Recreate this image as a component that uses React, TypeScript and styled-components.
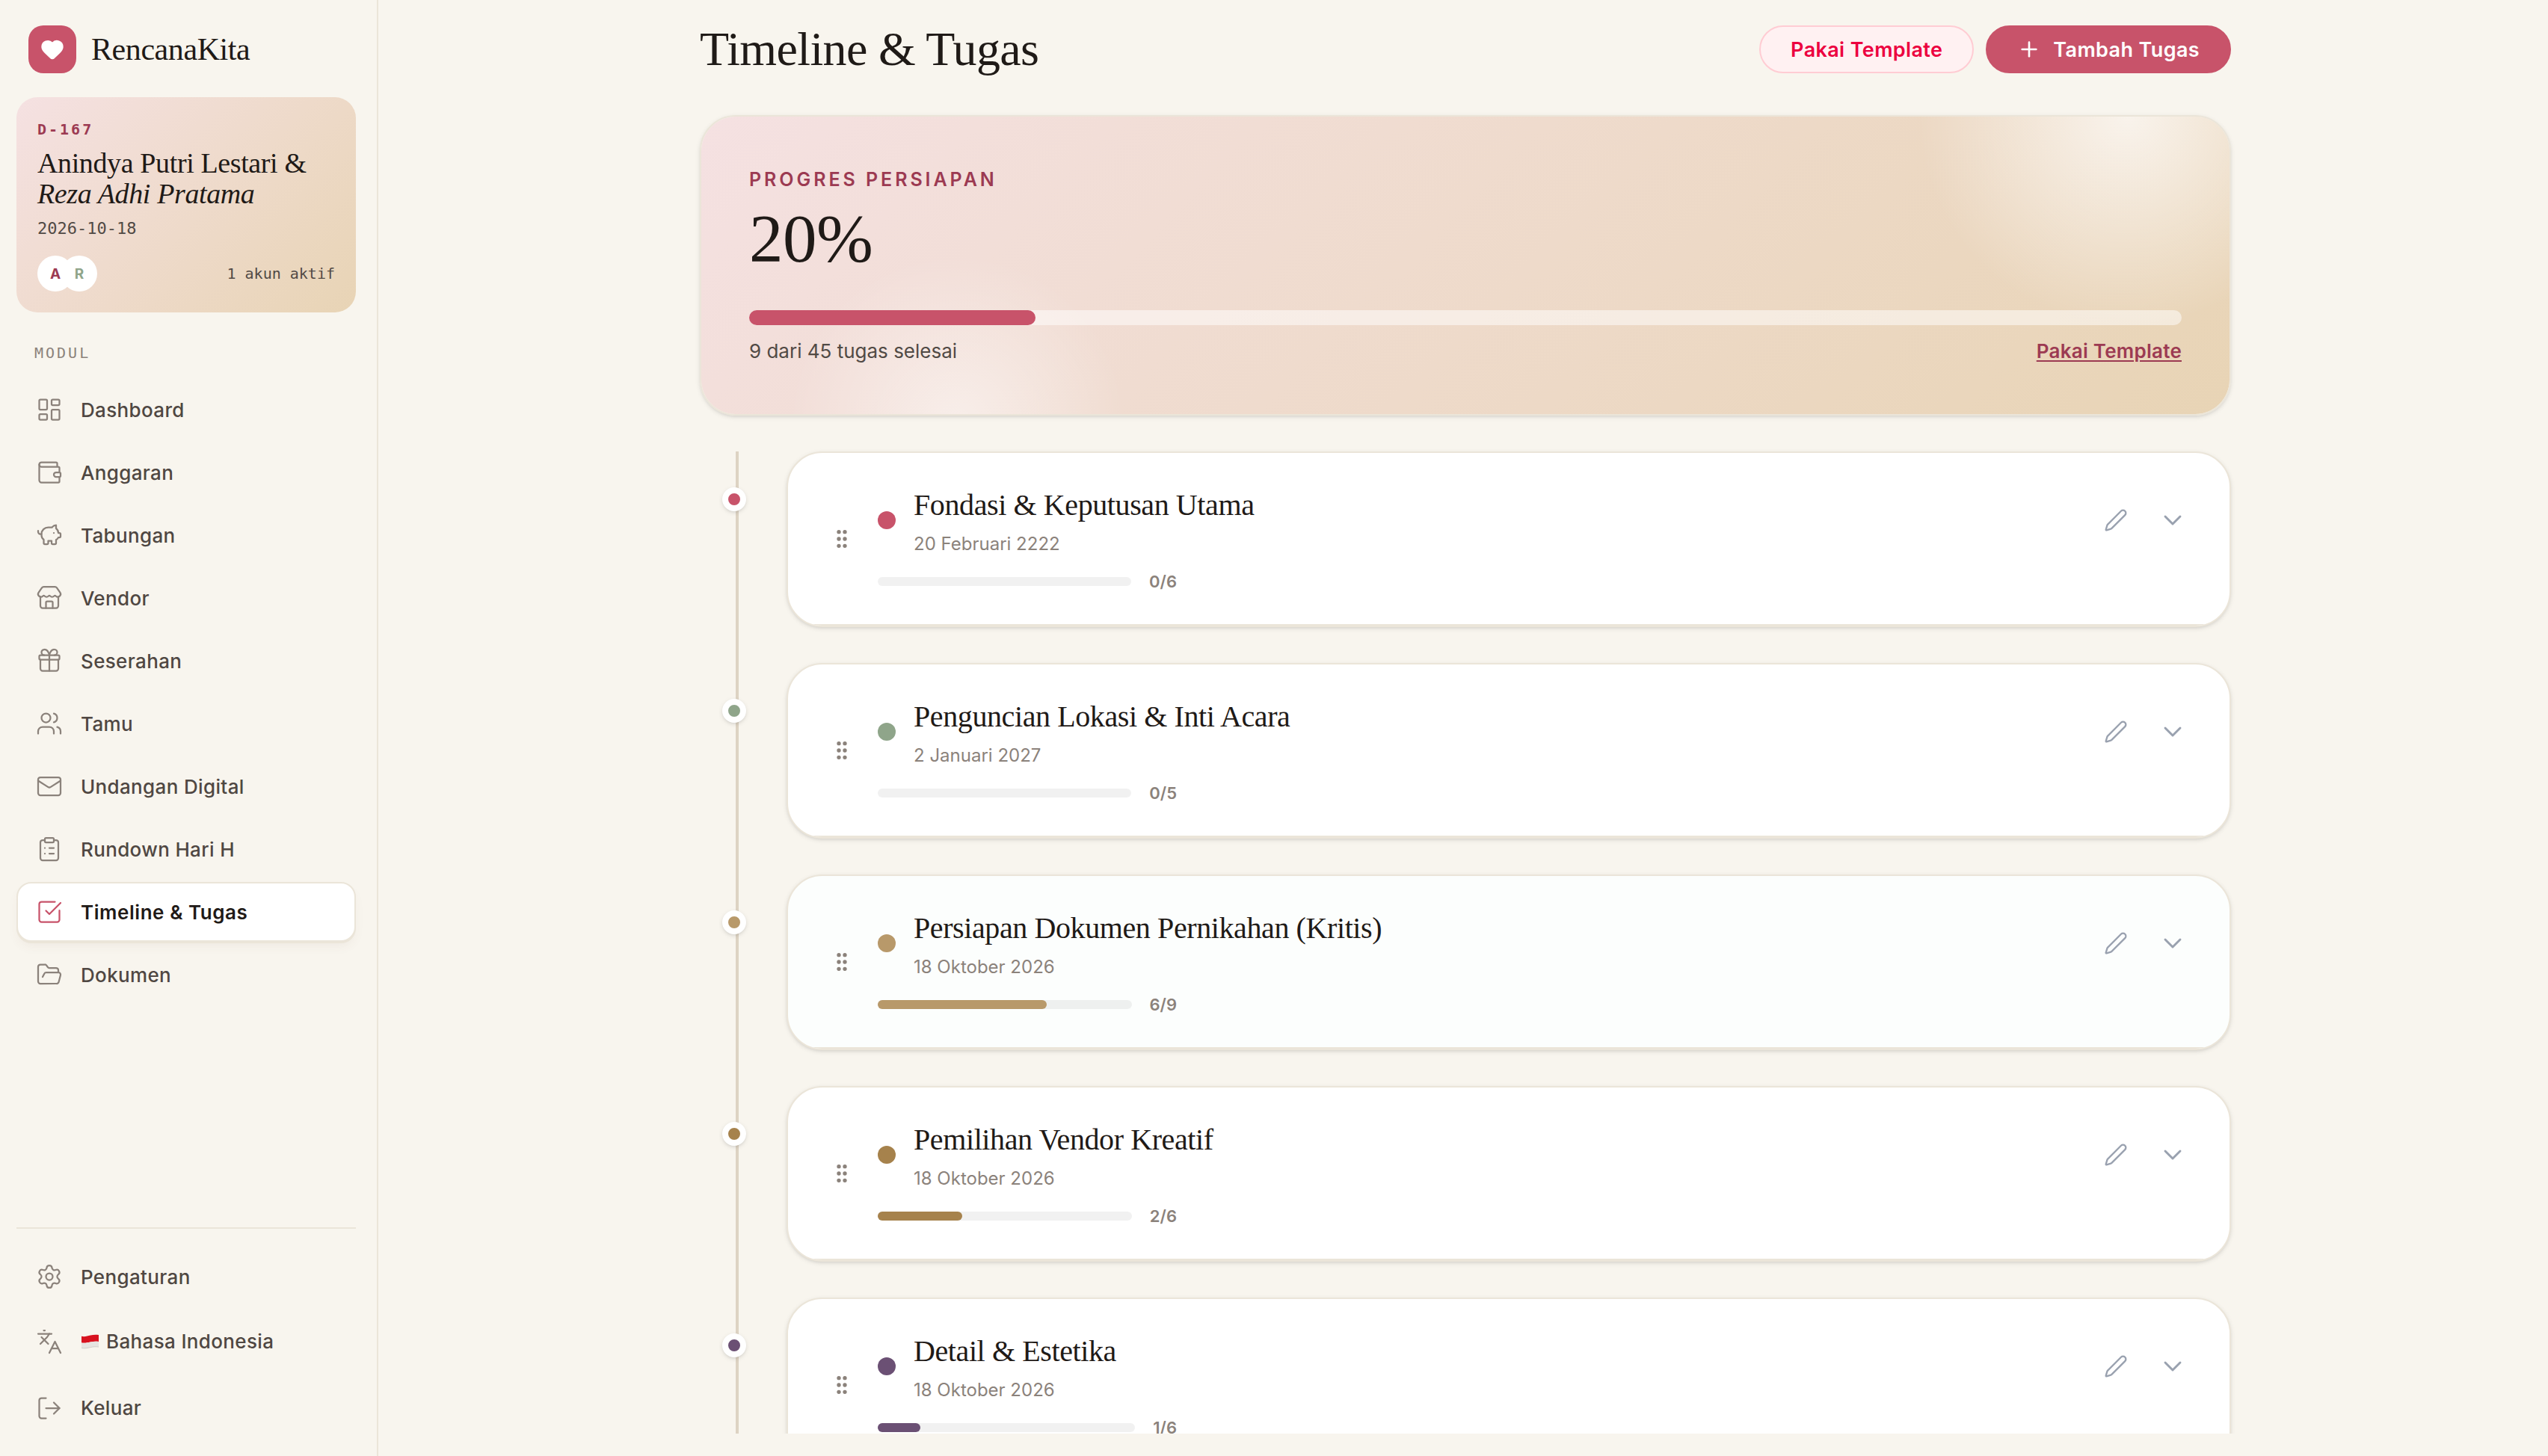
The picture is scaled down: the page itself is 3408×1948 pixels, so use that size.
import React from 'react';
import styled, { createGlobalStyle } from 'styled-components';
import {
  ChevronDown,
  ClipboardList,
  FolderOpen,
  GripVertical,
  Heart,
  Languages,
  LayoutDashboard,
  LogOut,
  Mail,
  Pen,
  PiggyBank,
  Plus,
  Settings,
  Store,
  Users,
  Wallet,
} from 'lucide-react';

const sans = `Inter, "Liberation Sans", sans-serif`;
const serif = `"Liberation Serif", "Times New Roman", serif`;
const mono = `"DejaVu Sans Mono", "Liberation Mono", monospace`;

const GlobalStyle = createGlobalStyle`
  * {
    box-sizing: border-box;
  }

  body {
    margin: 0;
    background-color: #f8f5ee;
    color: #1f1a17;
    font-family: ${sans};
    -webkit-font-smoothing: antialiased;
  }
`;

const Layout = styled.div`
  display: flex;
  height: 1948px;
  overflow: hidden;
`;

/* Sidebar */

const Sidebar = styled.aside`
  display: flex;
  flex-direction: column;
  width: 506px;
  flex-shrink: 0;
  padding: 34px 28px 22px 22px;
  border-right: 2px solid #ebe5d9;
`;

const Brand = styled.div`
  display: flex;
  align-items: center;
  gap: 20px;
  padding-left: 16px;
  margin-bottom: 32px;
`;

const BrandMark = styled.div`
  display: flex;
  align-items: center;
  justify-content: center;
  width: 64px;
  height: 64px;
  border-radius: 20px;
  background-color: #c8536a;
  color: #ffffff;
`;

const BrandName = styled.div`
  font-family: ${serif};
  font-size: 42px;
  line-height: 64px;
  letter-spacing: -0.01em;
`;

const CoupleCard = styled.div`
  display: flex;
  flex-direction: column;
  height: 288px;
  padding: 28px;
  border-radius: 28px;
  background: linear-gradient(135deg, #f5e1e2 0%, #e8d4b5 100%);
`;

const Countdown = styled.div`
  font-family: ${mono};
  font-size: 20px;
  font-weight: 700;
  line-height: 30px;
  letter-spacing: 0.15em;
  color: #9c3a52;
`;

const CoupleNames = styled.div`
  margin-top: 10px;
  font-family: ${serif};
  font-size: 38px;
  line-height: 41.4px;
  letter-spacing: -0.01em;
  white-space: nowrap;
`;

const WeddingDate = styled.div`
  margin-top: 8px;
  font-family: ${mono};
  font-size: 22px;
  line-height: 33px;
  color: #514a45;
`;

const CoupleFooter = styled.div`
  display: flex;
  align-items: center;
  justify-content: space-between;
  margin-top: auto;
`;

const Avatars = styled.div`
  display: flex;
`;

const Avatar = styled.div<{ $color: string }>`
  display: flex;
  align-items: center;
  justify-content: center;
  width: 48px;
  height: 48px;
  border-radius: 50%;
  background-color: #ffffff;
  color: ${({ $color }) => $color};
  font-size: 19px;
  font-weight: 700;

  & + & {
    margin-left: -16px;
  }
`;

const AccountCount = styled.div`
  font-family: ${mono};
  font-size: 20px;
  color: #514a45;
`;

const SectionLabel = styled.div`
  margin: 39px 0 21px;
  padding-left: 24px;
  font-family: ${mono};
  font-size: 20px;
  line-height: 30px;
  letter-spacing: 0.15em;
  color: #8b827b;
`;

const NavList = styled.nav`
  display: flex;
  flex-direction: column;
  gap: 4px;
`;

const NavItem = styled.a<{ $active?: boolean; $tall?: boolean }>`
  display: flex;
  align-items: center;
  gap: 24px;
  height: ${({ $tall }) => ($tall ? 85 : 80)}px;
  padding: 0 24px;
  border: 2px solid ${({ $active }) => ($active ? '#ebe5d9' : 'transparent')};
  border-radius: 20px;
  background-color: ${({ $active }) => ($active ? '#ffffff' : 'transparent')};
  box-shadow: ${({ $active }) =>
    $active ? '0 2px 0 #ebe5d9, 0 8px 16px -4px rgba(120, 80, 60, 0.08)' : 'none'};
  color: ${({ $active }) => ($active ? '#1f1a17' : '#4f4742')};
  font-size: 26px;
  font-weight: ${({ $active }) => ($active ? 600 : 500)};
  letter-spacing: ${({ $active }) => ($active ? 0.55 : 0.35)}px;

  svg {
    flex-shrink: 0;
    color: ${({ $active }) => ($active ? '#c8536a' : '#8b827b')};
  }
`;

const NavLabel = styled.span`
  display: flex;
  align-items: center;
  gap: 8px;
`;

const SidebarFooter = styled.div`
  display: flex;
  flex-direction: column;
  gap: 4px;
  margin-top: auto;
  padding-top: 24px;
  border-top: 2px solid #ebe5d9;
`;

/* Main column */

const Main = styled.main`
  flex: 1;
  display: flex;
  justify-content: center;
  height: 1918px;
  overflow: hidden;
`;

const Content = styled.div`
  width: 2048px;
  margin-left: 6px;
  padding-top: 34px;
`;

const PageHeader = styled.header`
  display: flex;
  align-items: center;
  justify-content: space-between;
  height: 64px;
  margin-bottom: 56px;
`;

const PageTitle = styled.h1`
  margin: 0;
  font-family: ${serif};
  font-size: 64px;
  font-weight: 400;
  line-height: 64px;
  letter-spacing: -0.01em;
`;

const Actions = styled.div`
  display: flex;
  gap: 16px;
`;

const Button = styled.button<{ $primary?: boolean }>`
  display: flex;
  align-items: center;
  gap: 16px;
  height: 64px;
  padding: 0 40px;
  border: 2px solid ${({ $primary }) => ($primary ? '#c8536a' : '#ffccd3')};
  border-radius: 32px;
  background-color: ${({ $primary }) => ($primary ? '#c8536a' : '#fff1f2')};
  color: ${({ $primary }) => ($primary ? '#ffffff' : '#ec003f')};
  font-family: ${sans};
  font-size: 27px;
  font-weight: 600;
  letter-spacing: 0.37px;
  white-space: nowrap;
`;

const ProgressCard = styled.section`
  height: 402px;
  margin-bottom: 48px;
  padding: 66px 64px 0;
  border: 2px solid #ebe5d9;
  border-radius: 48px;
  background:
    radial-gradient(circle 280px at 1908px 0, rgba(255, 255, 255, 0.7), rgba(255, 255, 255, 0)) padding-box,
    radial-gradient(circle 225px at 342px 410px, rgba(255, 255, 255, 0.5), rgba(255, 255, 255, 0)) padding-box,
    linear-gradient(135deg, #f5e1e2 0%, #e8d4b5 100%) padding-box;
  box-shadow: 0 2px 6px rgba(0, 0, 0, 0.1), 0 2px 4px -2px rgba(0, 0, 0, 0.1);
`;

const ProgressLabel = styled.div`
  font-size: 25px;
  font-weight: 600;
  line-height: 36px;
  letter-spacing: 3.95px;
  color: #9c3a52;
`;

const ProgressValue = styled.div`
  margin-top: 16px;
  font-family: ${serif};
  font-size: 91px;
  line-height: 92px;
  letter-spacing: -0.005em;
`;

const ProgressTrack = styled.div`
  height: 20px;
  margin-top: 49px;
  border-radius: 10px;
  background-color: rgba(255, 255, 255, 0.5);
`;

const ProgressFill = styled.div`
  height: 100%;
  border-radius: 10px;
  background-color: #c8536a;
`;

const ProgressMeta = styled.div`
  display: flex;
  justify-content: space-between;
  margin-top: 15px;
  font-size: 26px;
  line-height: 40px;
  color: #514a45;
`;

const TemplateLink = styled.a`
  color: #9c3a52;
  font-weight: 600;
  letter-spacing: 0.25px;
  text-decoration: underline;
  text-decoration-thickness: 2px;
  text-underline-offset: 3px;
`;

const Timeline = styled.div`
  display: flex;
  flex-direction: column;
  gap: 48px;
  margin-left: 48px;
  border-left: 4px solid #ddd3c3;
`;

const TimelineItem = styled.div`
  display: flex;
  align-items: flex-start;
  height: 235px;
`;

const TimelineNode = styled.div<{ $color: string }>`
  flex-shrink: 0;
  width: 32px;
  height: 32px;
  margin: 48px 54px 0 -22px;
  border: 8px solid #ffffff;
  border-radius: 50%;
  background-color: ${({ $color }) => $color};
  box-shadow: 0 2px 6px rgba(0, 0, 0, 0.1), 0 2px 4px -2px rgba(0, 0, 0, 0.1);
`;

const PhaseCard = styled.article<{ $tinted?: boolean }>`
  flex: 1;
  height: 235px;
  border: 2px solid #ebe5d9;
  border-radius: 48px;
  overflow: hidden;
  background-color: ${({ $tinted }) => ($tinted ? '#fcfefd' : '#ffffff')};
  box-shadow: 0 2px 6px rgba(0, 0, 0, 0.1), 0 2px 4px -2px rgba(0, 0, 0, 0.1);
`;

const PhaseHeader = styled.div`
  display: flex;
  align-items: center;
  height: 231px;
  padding: 0 56px;
  border-bottom: 2px solid #ebe5d9;

  > svg {
    color: #8b827b;
  }
`;

const PhaseBody = styled.div`
  flex: 1;
  margin-left: 32px;
`;

const PhaseTop = styled.div`
  display: flex;
  align-items: center;
  height: 100px;
`;

const PhaseDot = styled.div<{ $color: string }>`
  width: 24px;
  height: 24px;
  margin-right: 24px;
  border-radius: 50%;
  background-color: ${({ $color }) => $color};
`;

const PhaseTitle = styled.h2`
  margin: 0;
  font-family: ${serif};
  font-size: 40px;
  font-weight: 400;
  line-height: 56px;
  letter-spacing: -0.01em;
`;

const PhaseDate = styled.div`
  margin-top: 5px;
  padding-top: 1px;
  font-size: 24px;
  line-height: 35px;
  color: #8b827b;
`;

const PhaseActions = styled.div`
  display: flex;
  align-items: center;
  gap: 40px;
  margin-left: auto;
  color: #99a1af;
`;

const PhaseProgress = styled.div`
  display: flex;
  align-items: center;
  gap: 24px;
  width: 400px;
  height: 34px;
  margin-top: 15px;
`;

const PhaseTrack = styled.div`
  flex: 1;
  height: 12px;
  border-radius: 6px;
  background-color: rgba(0, 0, 0, 0.055);
`;

const PhaseFill = styled.div`
  height: 100%;
  border-radius: 6px;
`;

const PhaseCount = styled.div`
  font-size: 22px;
  font-weight: 600;
  color: #8b827b;
`;

interface IconProps {
  size?: number;
  strokeWidth?: number;
}

const GiftIcon: React.FC<IconProps> = ({ size = 24, strokeWidth = 2 }) => (
  <svg
    width={size}
    height={size}
    viewBox="0 0 24 24"
    fill="none"
    stroke="currentColor"
    strokeWidth={strokeWidth}
    strokeLinecap="round"
    strokeLinejoin="round"
  >
    <path d="M12 7v14" />
    <path d="M20 11v8a2 2 0 0 1-2 2H6a2 2 0 0 1-2-2v-8" />
    <path d="M7.5 7a1 1 0 0 1 0-5A4.8 8 0 0 1 12 7a4.8 8 0 0 1 4.5-5 1 1 0 0 1 0 5" />
    <rect x="3" y="7" width="18" height="4" rx="1" />
  </svg>
);

const CheckBoxIcon: React.FC<IconProps> = ({ size = 24, strokeWidth = 2 }) => (
  <svg
    width={size}
    height={size}
    viewBox="0 0 24 24"
    fill="none"
    stroke="currentColor"
    strokeWidth={strokeWidth}
    strokeLinecap="round"
    strokeLinejoin="round"
  >
    <path d="M21 10.8V19a2 2 0 0 1-2 2H5a2 2 0 0 1-2-2V5a2 2 0 0 1 2-2h12" />
    <path d="m9 11 3 3L22 4" />
  </svg>
);

const FlagIndonesia: React.FC = () => (
  <svg width="26" height="20" viewBox="0 0 26 20">
    <path d="M1 2.8c4.500 1 8-.4 12-1.300 4-.8 7.500-.9 11-.4v9c-3.500-.5-7-.4-11 .4-4 .8-7.500 1.800-12 1z" fill="#d8121f" />
    <path d="M1 11.500c4.500.8 8-.2 12-1 4-.8 7.500-.9 11-.4v7c-3.500-.5-7-.4-11 .5-4 .9-7.500 1.800-12 .9z" fill="#e6e4e1" />
    <path d="M1 18.500c4.500.9 8 0 12-.9 4-.9 7.500-1 11-.5" fill="none" stroke="#c9c6c2" strokeWidth="0.8" />
  </svg>
);

interface NavEntry {
  label: string;
  icon: React.ComponentType<IconProps>;
  active?: boolean;
}

const navEntries: NavEntry[] = [
  { label: 'Dashboard', icon: LayoutDashboard },
  { label: 'Anggaran', icon: Wallet },
  { label: 'Tabungan', icon: PiggyBank },
  { label: 'Vendor', icon: Store },
  { label: 'Seserahan', icon: GiftIcon },
  { label: 'Tamu', icon: Users },
  { label: 'Undangan Digital', icon: Mail },
  { label: 'Rundown Hari H', icon: ClipboardList },
  { label: 'Timeline & Tugas', icon: CheckBoxIcon, active: true },
  { label: 'Dokumen', icon: FolderOpen },
];

interface Phase {
  title: string;
  date: string;
  done: number;
  total: number;
  color: string;
  tinted?: boolean;
}

const phases: Phase[] = [
  { title: 'Fondasi & Keputusan Utama', date: '20 Februari 2222', done: 0, total: 6, color: '#c8536a' },
  { title: 'Penguncian Lokasi & Inti Acara', date: '2 Januari 2027', done: 0, total: 5, color: '#8fa58a' },
  { title: 'Persiapan Dokumen Pernikahan (Kritis)', date: '18 Oktober 2026', done: 6, total: 9, color: '#b8996a', tinted: true },
  { title: 'Pemilihan Vendor Kreatif', date: '18 Oktober 2026', done: 2, total: 6, color: '#a6824c' },
  { title: 'Detail & Estetika', date: '18 Oktober 2026', done: 1, total: 6, color: '#6b5074' },
];

const doneTasks = phases.reduce((sum, phase) => sum + phase.done, 0);
const totalTasks = 45;

const PhaseRow: React.FC<{ phase: Phase }> = ({ phase }) => (
  <TimelineItem>
    <TimelineNode $color={phase.color} />
    <PhaseCard $tinted={phase.tinted}>
      <PhaseHeader>
        <GripVertical size={32} />
        <PhaseBody>
          <PhaseTop>
            <PhaseDot $color={phase.color} />
            <div>
              <PhaseTitle>{phase.title}</PhaseTitle>
              <PhaseDate>{phase.date}</PhaseDate>
            </div>
            <PhaseActions>
              <Pen size={32} strokeWidth={1.75} />
              <ChevronDown size={40} strokeWidth={1.75} />
            </PhaseActions>
          </PhaseTop>
          <PhaseProgress>
            <PhaseTrack>
              <PhaseFill
                style={{
                  width: `${(phase.done / phase.total) * 100}%`,
                  backgroundColor: phase.color,
                }}
              />
            </PhaseTrack>
            <PhaseCount>
              {phase.done}/{phase.total}
            </PhaseCount>
          </PhaseProgress>
        </PhaseBody>
      </PhaseHeader>
    </PhaseCard>
  </TimelineItem>
);

const App: React.FC = () => (
  <>
    <GlobalStyle />
    <Layout>
      <Sidebar>
        <Brand>
          <BrandMark>
            <Heart size={32} fill="currentColor" />
          </BrandMark>
          <BrandName>RencanaKita</BrandName>
        </Brand>

        <CoupleCard>
          <Countdown>D-167</Countdown>
          <CoupleNames>
            Anindya Putri Lestari &amp;
            <br />
            <em>Reza Adhi Pratama</em>
          </CoupleNames>
          <WeddingDate>2026-10-18</WeddingDate>
          <CoupleFooter>
            <Avatars>
              <Avatar $color="#9c3a52">A</Avatar>
              <Avatar $color="#8fa58a">R</Avatar>
            </Avatars>
            <AccountCount>1 akun aktif</AccountCount>
          </CoupleFooter>
        </CoupleCard>

        <SectionLabel>MODUL</SectionLabel>
        <NavList>
          {navEntries.map(({ label, icon: Icon, active }) => (
            <NavItem key={label} $active={active}>
              <Icon size={36} strokeWidth={1.5} />
              <NavLabel>{label}</NavLabel>
            </NavItem>
          ))}
        </NavList>

        <SidebarFooter>
          <NavItem>
            <Settings size={36} strokeWidth={1.5} />
            <NavLabel>Pengaturan</NavLabel>
          </NavItem>
          <NavItem $tall>
            <Languages size={36} strokeWidth={1.5} />
            <NavLabel>
              <FlagIndonesia />
              Bahasa Indonesia
            </NavLabel>
          </NavItem>
          <NavItem $tall>
            <LogOut size={36} strokeWidth={1.5} />
            <NavLabel>Keluar</NavLabel>
          </NavItem>
        </SidebarFooter>
      </Sidebar>

      <Main>
        <Content>
          <PageHeader>
            <PageTitle>Timeline &amp; Tugas</PageTitle>
            <Actions>
              <Button>Pakai Template</Button>
              <Button $primary>
                <Plus size={32} />
                Tambah Tugas
              </Button>
            </Actions>
          </PageHeader>

          <ProgressCard>
            <ProgressLabel>PROGRES PERSIAPAN</ProgressLabel>
            <ProgressValue>20%</ProgressValue>
            <ProgressTrack>
              <ProgressFill style={{ width: `${(doneTasks / totalTasks) * 100}%` }} />
            </ProgressTrack>
            <ProgressMeta>
              <span>
                {doneTasks} dari {totalTasks} tugas selesai
              </span>
              <TemplateLink>Pakai Template</TemplateLink>
            </ProgressMeta>
          </ProgressCard>

          <Timeline>
            {phases.map((phase) => (
              <PhaseRow key={phase.title} phase={phase} />
            ))}
          </Timeline>
        </Content>
      </Main>
    </Layout>
  </>
);

export default App;
